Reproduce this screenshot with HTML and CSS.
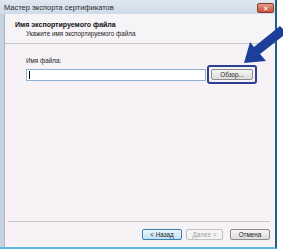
FILE: index.html
```html
<!DOCTYPE html>
<html>
<head>
<meta charset="utf-8">
<link rel="stylesheet" href="styles.css">
</head>
<body>
<div class="window">
  <div class="titlebar">
    <span class="title">Мастер экспорта сертификатов</span>
    <span class="close">✕</span>
  </div>
  <div class="client">
    <div class="header">
      <div class="h1">Имя экспортируемого файла</div>
      <div class="h2">Укажите имя экспортируемого файла</div>
    </div>
    <div class="body">
      <div class="label">Имя файла:</div>
      <div class="row">
        <div class="input"><span class="caret"></span></div>
        <div class="hl"><div class="btn">Обзор...</div></div>
      </div>
    </div>
    <div class="footer">
      <div class="btn def">&lt; Назад</div>
      <div class="btn dis">Далее &gt;</div>
      <div class="btn cancel">Отмена</div>
    </div>
  </div>
  <svg class="arrow" width="50" height="45" viewBox="0 0 50 45">
    <polygon points="40,0 47,7 20,28 26,35 4,37 10,16 14,21" fill="#1c3f9a"/>
  </svg>
</div>
</body>
</html>
```
FILE: styles.css
```css
html, body {
  margin: 0;
  padding: 0;
  background: #ffffff;
}
body {
  width: 283px;
  height: 251px;
  overflow: hidden;
  font-family: "Liberation Sans", Arial, sans-serif;
  font-size: 6.3px;
  color: #222;
}
.window {
  position: relative;
  width: 277px;
  height: 249px;
  box-sizing: border-box;
  background: #c7d3e1;
  border-right: 2px solid #1f5f86;
  border-bottom: 2px solid #5fb8e0;
  display: flex;
  flex-direction: column;
}
.titlebar {
  height: 14px;
  display: flex;
  align-items: center;
  justify-content: space-between;
  padding: 0 1px 0 4px;
  background: linear-gradient(#dfe7f0, #cfdbe8);
}
.title {
  font-size: 7.5px;
  color: #2b2b2b;
}
.close {
  width: 17px;
  height: 10px;
  margin-top: 1px;
  border-radius: 2px;
  background: linear-gradient(#e49a86, #c8503a);
  color: #fff;
  font-size: 7px;
  line-height: 10px;
  text-align: center;
  border: 1px solid #8b3a2c;
  box-sizing: border-box;
}
.client {
  flex: 1;
  margin-left: 4px;
  background: #f6f2f6;
  display: flex;
  flex-direction: column;
  border-left: 1px solid #a9b6c6;
}
.header {
  height: 30px;
  border-bottom: 1px solid #c9c6ca;
  padding: 6px 0 0 10px;
  box-sizing: border-box;
  background: #f7f4f7;
}
.h1 {
  font-weight: bold;
  font-size: 7px;
  line-height: 9px;
  color: #111;
}
.h2 {
  padding-left: 11px;
  line-height: 9px;
  color: #222;
}
.body {
  flex: 1;
  padding: 13px 0 0 21px;
}
.label {
  line-height: 8px;
  color: #222;
}
.row {
  display: flex;
  align-items: center;
}
.input {
  width: 180px;
  height: 12px;
  background: #fff;
  border: 1px solid #8fb0d0;
  box-sizing: border-box;
  display: flex;
  align-items: center;
  padding-left: 2px;
}
.caret {
  width: 1px;
  height: 8px;
  background: #000;
}
.hl {
  margin-left: 1px;
  border: 2px solid #2b3f8e;
  border-radius: 3px;
  padding: 2px;
  background: #f6f2f6;
}
.btn {
  height: 11px;
  box-sizing: border-box;
  border: 1px solid #8c8c8c;
  border-radius: 2px;
  background: linear-gradient(#f4f4f4, #dcdcdc);
  font-size: 6.3px;
  line-height: 9px;
  text-align: center;
  color: #222;
}
.hl .btn {
  width: 42px;
}
.footer {
  height: 26px;
  margin: 0 5px 0 3px;
  border-top: 1px solid #c9c6ca;
  display: flex;
  justify-content: flex-end;
  padding-top: 7px;
  box-sizing: border-box;
}
.footer .btn {
  width: 40px;
  height: 11px;
}
.footer .def {
  border-color: #3c7fb1;
  background: linear-gradient(#eaf6fd, #c0e0f4);
  margin-right: 4px;
}
.footer .dis {
  width: 37px;
  color: #a0a0a0;
  border-color: #c0c0c0;
  background: #f4f4f4;
  margin-right: 7px;
}
.arrow {
  position: absolute;
  left: 240px;
  top: 26px;
  overflow: visible;
}
```
